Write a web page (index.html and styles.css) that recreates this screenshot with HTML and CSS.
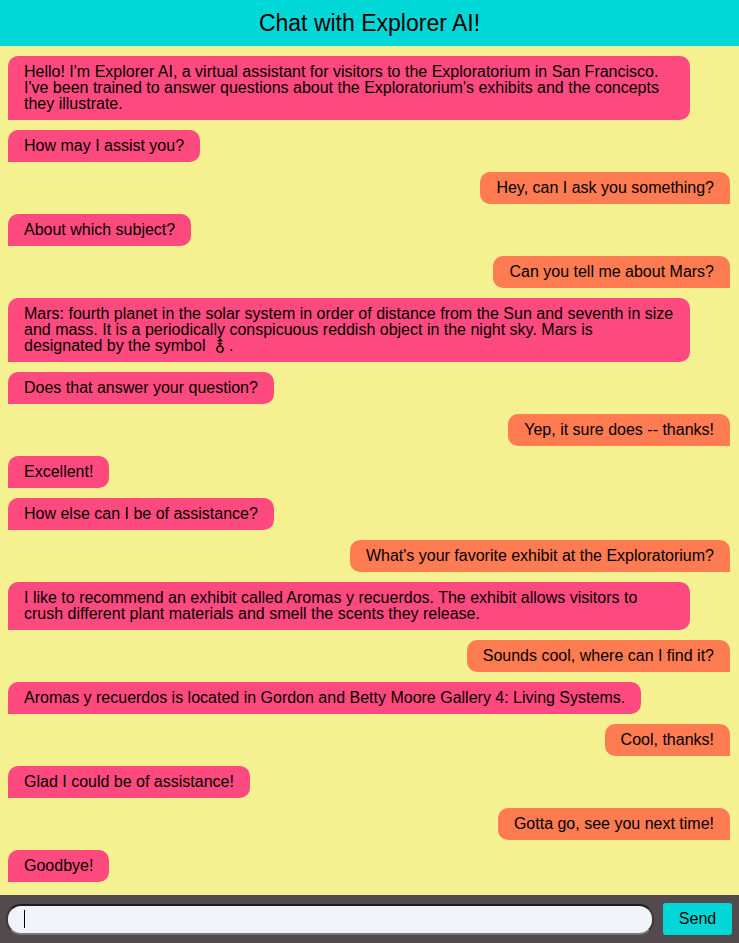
FILE: index.html
```html
<!DOCTYPE html>
<html lang="en">
<head>
<meta charset="utf-8">
<title>Chat with Explorer AI!</title>
<link rel="stylesheet" href="styles.css">
</head>
<body>
<div class="app">
  <header class="header"><h1 class="title">Chat with Explorer AI!</h1></header>
  <main class="messages">
    <div class="msg bot">Hello! I'm Explorer AI, a virtual assistant for visitors to the Exploratorium in San Francisco. I've been trained to answer questions about the Exploratorium's exhibits and the concepts they illustrate.</div>
    <div class="msg bot">How may I assist you?</div>
    <div class="msg user">Hey, can I ask you something?</div>
    <div class="msg bot">About which subject?</div>
    <div class="msg user">Can you tell me about Mars?</div>
    <div class="msg bot">Mars: fourth planet in the solar system in order of distance from the Sun and seventh in size and mass. It is a periodically conspicuous reddish object in the night sky. Mars is designated by the symbol <svg class="mars" width="10" height="15" viewBox="0 0 10 15" role="img" aria-label="♂"><circle cx="5" cy="11.2" r="3.1" fill="none" stroke="#000" stroke-width="1.3"/><path d="M5 8.1V1M2.6 3.4L5 1L7.4 3.4M2.9 5.6h4.2" fill="none" stroke="#000" stroke-width="1.2"/></svg>.</div>
    <div class="msg bot">Does that answer your question?</div>
    <div class="msg user">Yep, it sure does -- thanks!</div>
    <div class="msg bot">Excellent!</div>
    <div class="msg bot">How else can I be of assistance?</div>
    <div class="msg user">What's your favorite exhibit at the Exploratorium?</div>
    <div class="msg bot">I like to recommend an exhibit called Aromas y recuerdos. The exhibit allows visitors to crush different plant materials and smell the scents they release.</div>
    <div class="msg user">Sounds cool, where can I find it?</div>
    <div class="msg bot">Aromas y recuerdos is located in Gordon and Betty Moore Gallery 4: Living Systems.</div>
    <div class="msg user">Cool, thanks!</div>
    <div class="msg bot">Glad I could be of assistance!</div>
    <div class="msg user">Gotta go, see you next time!</div>
    <div class="msg bot">Goodbye!</div>
  </main>
  <form class="composer">
    <input class="input" type="text" aria-label="Message" autofocus>
    <button class="send" type="button">Send</button>
  </form>
</div>
</body>
</html>
```

FILE: styles.css
```css
html, body {
  margin: 0;
  padding: 0;
  height: 100%;
}
body {
  font-family: "Liberation Sans", Arial, Helvetica, sans-serif;
  font-size: 16px;
  color: #000;
  background: #f5f191;
}
.app {
  display: flex;
  flex-direction: column;
  height: 100vh;
}
.header {
  background: #00d8d8;
  height: 46px;
  display: flex;
  align-items: center;
  justify-content: center;
  flex: none;
}
.title {
  margin: 0;
  font-size: 23px;
  font-weight: normal;
  line-height: 1;
}
.messages {
  flex: 1;
  overflow: auto;
  display: flex;
  flex-direction: column;
  align-items: flex-start;
  gap: 10px;
  padding: 10px 9px 10px 8px;
  box-sizing: border-box;
}
.msg {
  box-sizing: border-box;
  max-width: 682px;
  padding: 8px 16px;
  line-height: 16px;
  border-radius: 10px;
}
.bot {
  background: #ff4a7f;
  border-bottom-left-radius: 0;
}
.user {
  background: #ff7b52;
  align-self: flex-end;
  border-bottom-right-radius: 0;
}
.mars {
  vertical-align: -2px;
  margin: 0 4px 0 5px;
}
.composer {
  flex: none;
  margin: 0;
  height: 48px;
  box-sizing: border-box;
  background: #524a4d;
  display: flex;
  align-items: center;
  gap: 9px;
  padding: 0 7px 0 6px;
}
.input {
  flex: 1;
  height: 31px;
  box-sizing: border-box;
  border-width: 2px;
  border-style: solid;
  border-color: #1e1e1e #3a3a3a #7a7a7a #3a3a3a;
  border-radius: 15px;
  background: #f1f3fb linear-gradient(#000, #000) no-repeat 16px center / 1px 18px;
  padding: 0 16px;
  font-family: "Liberation Sans", Arial, sans-serif;
  font-size: 16px;
  outline: none;
}
.send {
  flex: none;
  width: 69px;
  height: 32px;
  border: none;
  border-radius: 3px;
  background: #00d8d8;
  font-family: "Liberation Sans", Arial, sans-serif;
  font-size: 16px;
  color: #000;
  padding: 0;
}
```
